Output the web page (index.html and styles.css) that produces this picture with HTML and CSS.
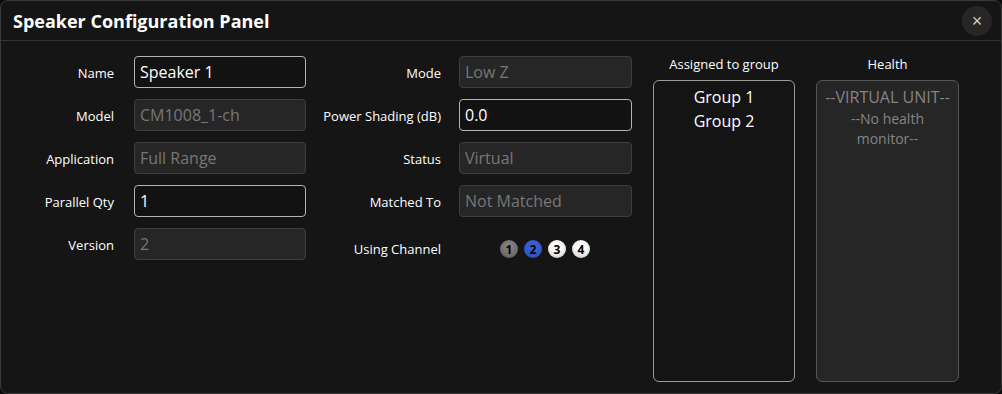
FILE: index.html
```html
<!DOCTYPE html>
<html lang="en">
<head>
    <meta charset="UTF-8">
    <meta name="viewport" content="width=device-width, initial-scale=1.0">
    <title>Speaker Configuration Panel</title>
    <link rel="stylesheet" href="styles.css">
</head>
<body>
    <div class="panel">
        <div class="panel-header">
            <h1>Speaker Configuration Panel</h1>
            <button class="close" type="button">&times;</button>
        </div>
        <div class="panel-body">
            <div class="fields">
                <label for="name">Name</label>
                <input id="name" type="text" value="Speaker 1">
                <label for="mode">Mode</label>
                <input id="mode" type="text" value="Low Z" disabled>

                <label for="model">Model</label>
                <input id="model" type="text" value="CM1008_1-ch" disabled>
                <label for="shading">Power Shading (dB)</label>
                <input id="shading" type="text" value="0.0">

                <label for="app">Application</label>
                <input id="app" type="text" value="Full Range" disabled>
                <label for="status">Status</label>
                <input id="status" type="text" value="Virtual" disabled>

                <label for="qty">Parallel Qty</label>
                <input id="qty" type="text" value="1">
                <label for="matched">Matched To</label>
                <input id="matched" type="text" value="Not Matched" disabled>

                <label for="version">Version</label>
                <input id="version" type="text" value="2" disabled>
                <label class="low">Using Channel</label>
                <div class="channels low">
                    <span class="chan off">1</span>
                    <span class="chan on">2</span>
                    <span class="chan free">3</span>
                    <span class="chan free">4</span>
                </div>
            </div>
            <div class="side">
                <div class="side-title">Assigned to group</div>
                <ul class="box groups">
                    <li>Group 1</li>
                    <li>Group 2</li>
                </ul>
            </div>
            <div class="side">
                <div class="side-title">Health</div>
                <div class="box health">
                    <div class="health-head">--VIRTUAL UNIT--</div>
                    <div>--No health monitor--</div>
                </div>
            </div>
        </div>
    </div>
</body>
</html>
```

FILE: styles.css
```css
* {
    box-sizing: border-box;
}
body {
    margin: 0;
    background-color: #0c0c0c;
    font-family: "Open Sans", Arial, sans-serif;
    color: #fff;
}
.panel {
    width: 1002px;
    height: 394px;
    background-color: #151515;
    border: 1px solid #3a3a3a;
    border-radius: 8px;
    display: flex;
    flex-direction: column;
}
.panel-header {
    height: 40px;
    border-bottom: 1px solid #333;
    display: flex;
    align-items: center;
    justify-content: space-between;
    padding: 0 9px 0 12px;
}
h1 {
    margin: 0;
    font-size: 18px;
    font-weight: 700;
}
.close {
    width: 30px;
    height: 30px;
    border-radius: 50%;
    border: none;
    background-color: #262626;
    color: #ccc;
    font-size: 18px;
    line-height: 30px;
    padding: 0;
    cursor: pointer;
}
.panel-body {
    flex: 1;
    display: flex;
    align-items: flex-start;
    padding: 15px 0 11px 0;
}
.fields {
    display: grid;
    grid-template-columns: 133px 172px 153px 173px;
    grid-auto-rows: 32px;
    row-gap: 11px;
    align-items: center;
}
label {
    font-size: 13px;
    text-align: right;
    padding-right: 20px;
    padding-top: 2px;
}
label:nth-child(4n+3) {
    padding-right: 18px;
}
input {
    height: 32px;
    width: 100%;
    padding: 0 5px;
    font-family: inherit;
    font-size: 16px;
    color: #fff;
    background-color: #121212;
    border: 1px solid #b4b4b4;
    border-radius: 4px;
    outline: none;
}
input:disabled {
    color: #777;
    background-color: #262626;
    border-color: #3e3e3e;
}
.low {
    position: relative;
    top: 4px;
}
.channels {
    display: flex;
    gap: 6px;
    padding-left: 41px;
    top: 5px;
}
.chan {
    width: 18px;
    height: 18px;
    border-radius: 50%;
    font-size: 12px;
    font-weight: 700;
    color: #000;
    display: flex;
    align-items: center;
    justify-content: center;
}
.chan.off {
    background: radial-gradient(circle at 50% 35%, #8a8a8a, #5a5a5a);
}
.chan.on {
    background: radial-gradient(circle at 50% 35%, #3f66d6, #2b4db8);
}
.chan.free {
    background: radial-gradient(circle at 50% 35%, #fff 30%, #c4c4c4);
}
.side {
    display: flex;
    flex-direction: column;
    align-items: center;
    margin-left: 21px;
    width: 142px;
}
.side + .side {
    width: 143px;
}
.side-title {
    font-size: 13px;
    height: 24px;
    line-height: 16px;
}
.box {
    width: 100%;
    height: 302px;
    border-radius: 6px;
    margin: 0;
    text-align: center;
}
.groups {
    list-style: none;
    padding: 4px 0 0 0;
    border: 1px solid #9a9a9a;
    background-color: #141414;
    font-size: 16px;
    line-height: 24px;
}
.health {
    padding: 4px 8px 0 8px;
    border: 1px solid #555;
    background-color: #262626;
    color: #858585;
    font-size: 14px;
    line-height: 20px;
}
.health-head {
    font-size: 16px;
    line-height: 24px;
}
```
